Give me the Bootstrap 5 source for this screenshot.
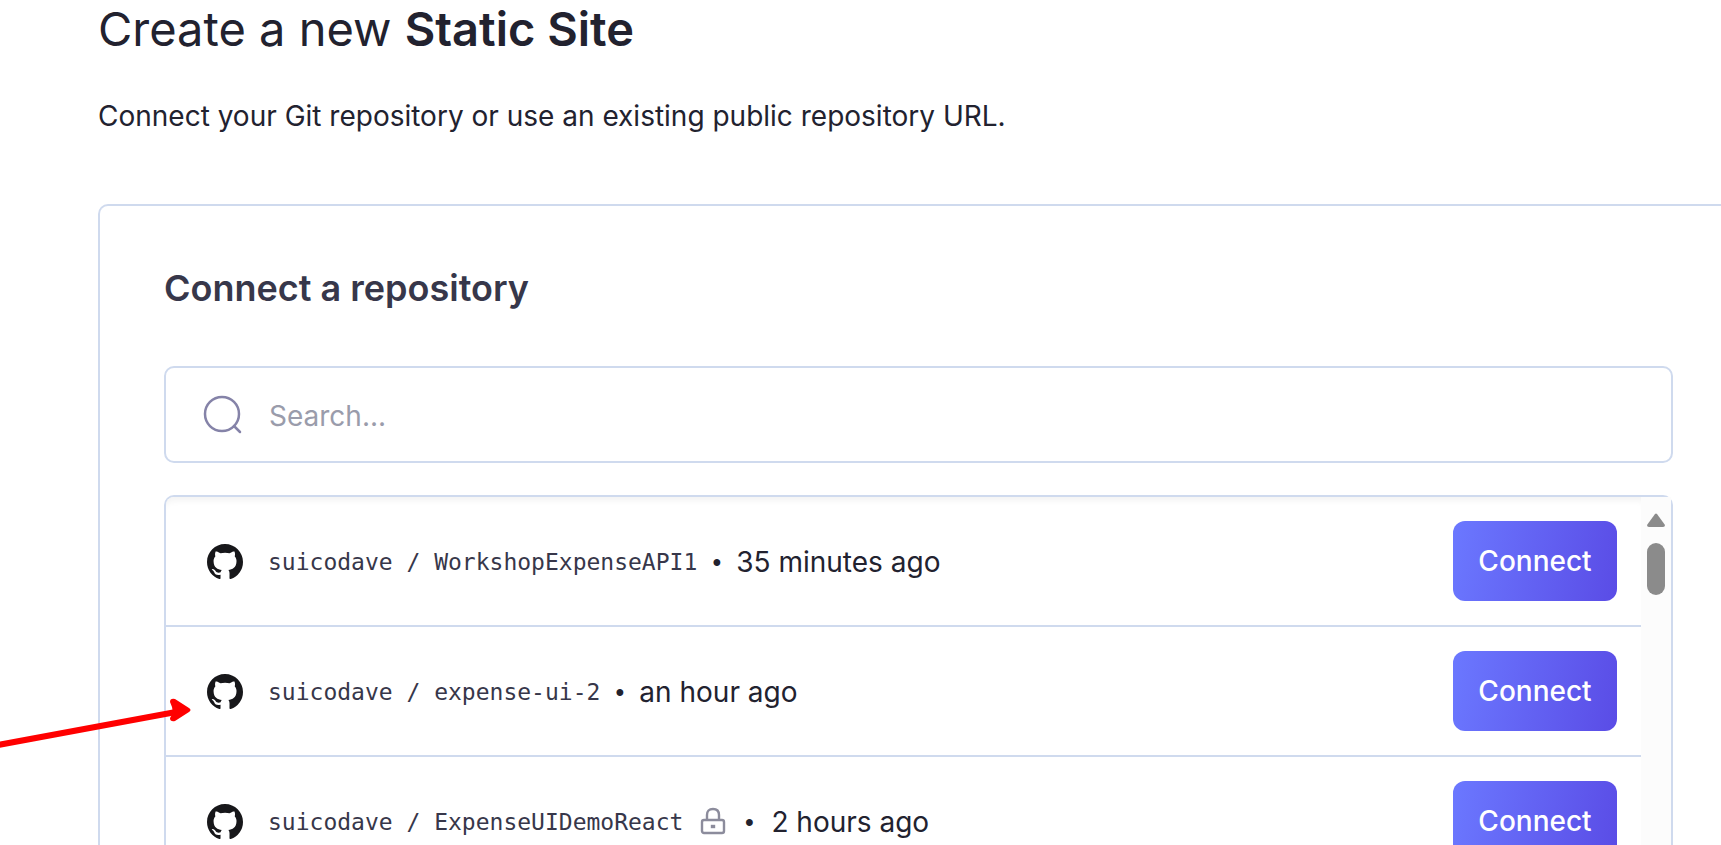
<!DOCTYPE html>
<html lang="en">
<head>
<meta charset="utf-8">
<meta name="viewport" content="width=device-width, initial-scale=1">
<title>Create a new Static Site</title>
<link href="https://cdn.jsdelivr.net/npm/bootstrap@5.3.0/dist/css/bootstrap.min.css" rel="stylesheet">
<style>
:root { --line: #cfdaee; --ink: #22222f; --ink-soft: #37374a; }
body { font-family: Inter, "Liberation Sans", sans-serif; font-size: 28px; line-height: 40px; color: var(--ink); background: #fff; }
.page { padding-left: 98px; }
.page-title { font-size: 47px; line-height: 58px; font-weight: 400; margin-bottom: 38px; }
.page-title strong { font-weight: 600; }
.intro { margin-bottom: 68px; }
.panel { border: 2px solid var(--line); border-right: 0; border-radius: 10px 0 0 10px; padding: 56px 48px 0 64px; }
.panel-title { font-size: 36px; line-height: 52px; font-weight: 600; color: var(--ink-soft); margin-bottom: 52px; }
.search-box { border: 2px solid var(--line); border-radius: 10px; padding: 3px 37px 0; height: 97px; gap: 24px; margin-bottom: 32px; }
.search-box input { font-size: 28px; line-height: 48px; height: 60px; padding: 0; border: 0; background: transparent; box-shadow: none; color: var(--ink); }
.search-box input:focus { box-shadow: none; }
.search-box input::placeholder { color: #9a9cab; opacity: 1; }
.repo-list { border: 2px solid var(--line); border-bottom: 0; border-radius: 10px 10px 0 0; }
.repo-rows { box-shadow: inset 0 8px 6px -4px #f4f4f4; border-top-left-radius: 8px; }
.repo-row { height: 130px; padding: 0 24px 0 41px; border-bottom: 2px solid var(--line); }
.repo-meta { padding-top: 2px; }
.repo-icon { width: 36px; height: 36px; margin-right: 25px; fill: #17171a; }
.repo-name { font-family: "DejaVu Sans Mono", monospace; font-size: 23px; color: var(--ink-soft); white-space: pre; }
.lock-icon { width: 28px; height: 30px; margin-left: 16px; }
.dot-sep { width: 39px; text-align: center; font-family: "Liberation Sans", sans-serif; font-size: 25px; }
.lock-icon + .dot-sep { width: 44px; }
.btn-connect { width: 164px; height: 80px; padding: 0; border: 0; border-radius: 12px; color: #fff; font-size: 28px; font-weight: 500; background: linear-gradient(100deg, #6b78ff, #5a4ce6); }
.btn-connect:hover { color: #fff; background: #5a4ce6; }
.track { width: 30px; background: #fcfcfc; padding-top: 16px; }
.thumb { width: 18px; height: 52px; border-radius: 9px; background: #8b8b8b; margin-top: 16px; }
.pointer { width: 192px; height: 60px; right: 100%; top: 66px; margin-right: -26px; pointer-events: none; }
</style>
</head>
<body>
<svg class="d-none" xmlns="http://www.w3.org/2000/svg">
  <symbol id="github" viewBox="0 0 16 16"><path d="M8 0C3.58 0 0 3.58 0 8c0 3.54 2.29 6.53 5.47 7.59.4.07.55-.17.55-.38 0-.19-.01-.82-.01-1.49-2.01.37-2.53-.49-2.69-.94-.09-.23-.48-.94-.82-1.13-.28-.15-.68-.52-.01-.53.63-.01 1.08.58 1.23.82.72 1.21 1.87.87 2.33.66.07-.52.28-.87.51-1.07-1.78-.2-3.64-.89-3.64-3.95 0-.87.31-1.59.82-2.15-.08-.2-.36-1.02.08-2.12 0 0 .67-.21 2.2.82.64-.18 1.32-.27 2-.27s1.36.09 2 .27c1.53-1.04 2.2-.82 2.2-.82.44 1.1.16 1.92.08 2.12.51.56.82 1.27.82 2.15 0 3.07-1.87 3.75-3.65 3.95.29.25.54.73.54 1.48 0 1.07-.01 1.93-.01 2.2 0 .21.15.46.55.38A8.01 8.01 0 0 0 16 8c0-4.42-3.58-8-8-8z"/></symbol>
</svg>
<div class="vh-100 overflow-hidden">
<main class="page d-flex flex-column h-100">
  <h1 class="page-title">Create a new <strong>Static Site</strong></h1>
  <p class="intro">Connect your Git repository or use an existing public repository URL.</p>
  <section class="panel d-flex flex-column flex-grow-1">
    <h2 class="panel-title">Connect a repository</h2>
    <div class="search-box d-flex align-items-center flex-shrink-0">
      <label for="repo-search" class="d-flex flex-shrink-0">
        <svg width="42" height="42" viewBox="0 0 42 42" fill="none" stroke="#8583a8" stroke-width="2.5" stroke-linecap="round" role="img" aria-label="Search repositories"><circle cx="19" cy="19" r="17"/><path d="M31 31l6 6"/></svg>
      </label>
      <input id="repo-search" type="text" class="form-control" placeholder="Search...">
    </div>
    <div class="repo-list d-flex flex-grow-1">
      <div class="repo-rows flex-grow-1">
        <div class="repo-row d-flex align-items-center">
          <div class="repo-meta d-flex align-items-center">
            <svg class="repo-icon flex-shrink-0" aria-hidden="true"><use href="#github"/></svg>
            <span class="repo-name">suicodave / WorkshopExpenseAPI1</span>
            <span class="dot-sep">•</span>
            <span>35 minutes ago</span>
          </div>
          <button type="button" class="btn btn-connect ms-auto">Connect</button>
        </div>
        <div class="repo-row d-flex align-items-center position-relative">
          <svg class="pointer position-absolute" viewBox="0 0 192 60" aria-hidden="true"><path d="M-2 52L176 19" stroke="#f00" stroke-width="6"/><path d="M170 9q0-4 5-3l14 9q3 2 0 4l-14 9q-5 1-5-3l3-5-1-6z" fill="#f00"/></svg>
          <div class="repo-meta d-flex align-items-center">
            <svg class="repo-icon flex-shrink-0" aria-hidden="true"><use href="#github"/></svg>
            <span class="repo-name">suicodave / expense-ui-2</span>
            <span class="dot-sep">•</span>
            <span>an hour ago</span>
          </div>
          <button type="button" class="btn btn-connect ms-auto">Connect</button>
        </div>
        <div class="repo-row d-flex align-items-center">
          <div class="repo-meta d-flex align-items-center">
            <svg class="repo-icon flex-shrink-0" aria-hidden="true"><use href="#github"/></svg>
            <span class="repo-name">suicodave / ExpenseUIDemoReact</span>
            <svg class="lock-icon" viewBox="0 0 28 30" fill="none" stroke="#8c8c9c" stroke-width="2.4" role="img" aria-label="Private"><path d="M8 13V8q0-6 6-6t6 6v5"/><rect x="3" y="13" width="22" height="13" rx="2"/><path d="M13 19h2v1h-2z"/></svg>
            <span class="dot-sep">•</span>
            <span>2 hours ago</span>
          </div>
          <button type="button" class="btn btn-connect ms-auto">Connect</button>
        </div>
      </div>
      <div class="track d-flex flex-column align-items-center flex-shrink-0">
        <svg width="18" height="14" viewBox="0 0 18 14" class="flex-shrink-0" aria-hidden="true"><path d="M8 1q1-1 2 0l8 11q0 2-2 2H2q-2 0-2-2z" fill="#8b8b8b"/></svg>
        <div class="thumb"></div>
      </div>
    </div>
  </section>
</main>
</div>
<script src="https://cdn.jsdelivr.net/npm/bootstrap@5.3.0/dist/js/bootstrap.bundle.min.js"></script>
</body>
</html>
